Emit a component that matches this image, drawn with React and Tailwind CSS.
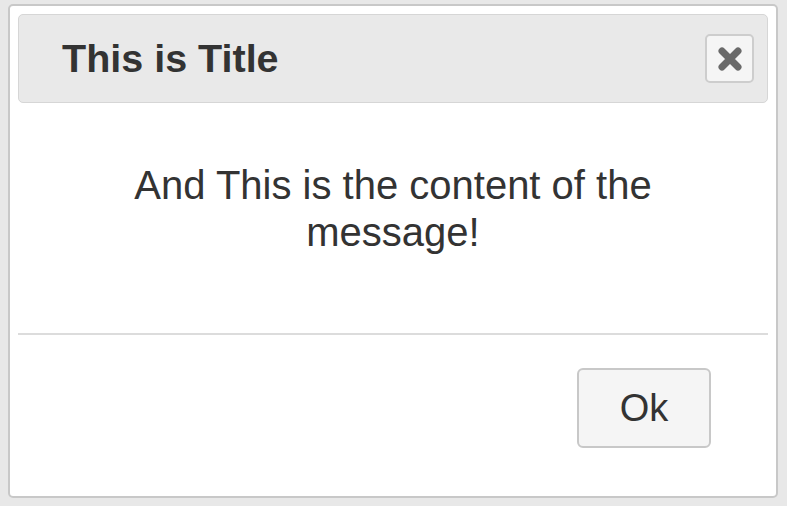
import React from 'react';

const CloseIcon = () => (
  <svg width="26" height="24" viewBox="0 0 26 24" className="blur-[0.7px]">
    <path d="M5 4 L21 20 M21 4 L5 20" stroke="#6a6a6a" strokeWidth="7" strokeLinecap="round" />
  </svg>
);

const App = () => {
  return (
    <div className="w-[787px] h-[506px] bg-[#e8e8e8] pl-[8px] pt-[4px] font-['Liberation_Sans',Arial,sans-serif] text-[#333]">
      <div className="w-[770px] h-[494px] bg-white border-2 border-[#c8c8c8] rounded-[5px] p-[8px] flex flex-col">
        {/* header */}
        <div className="h-[89px] bg-[#e9e9e9] border border-[#d6d6d6] rounded-[5px] flex items-center justify-between pl-[43px] pr-[13px]">
          <h1 className="text-[39.5px] font-bold leading-none">This is Title</h1>
          <button className="w-[49px] h-[49px] bg-[#f5f5f5] border-2 border-[#cdcdcd] rounded-[5px] flex items-center justify-center">
            <CloseIcon />
          </button>
        </div>

        {/* body */}
        <div className="h-[230px] pt-[59px] px-[40px] text-center">
          <p className="text-[40px] leading-[47px]">And This is the content of the message!</p>
        </div>

        <div className="h-[2px] bg-[#dcdcdc]" />

        {/* footer */}
        <div className="flex justify-end pr-[57px] pt-[33px]">
          <button className="w-[134px] h-[80px] bg-[#f5f5f5] border-2 border-[#c8c8c8] rounded-[6px] text-[38px] leading-none flex items-center justify-center">
            Ok
          </button>
        </div>
      </div>
    </div>
  );
};

export default App;
